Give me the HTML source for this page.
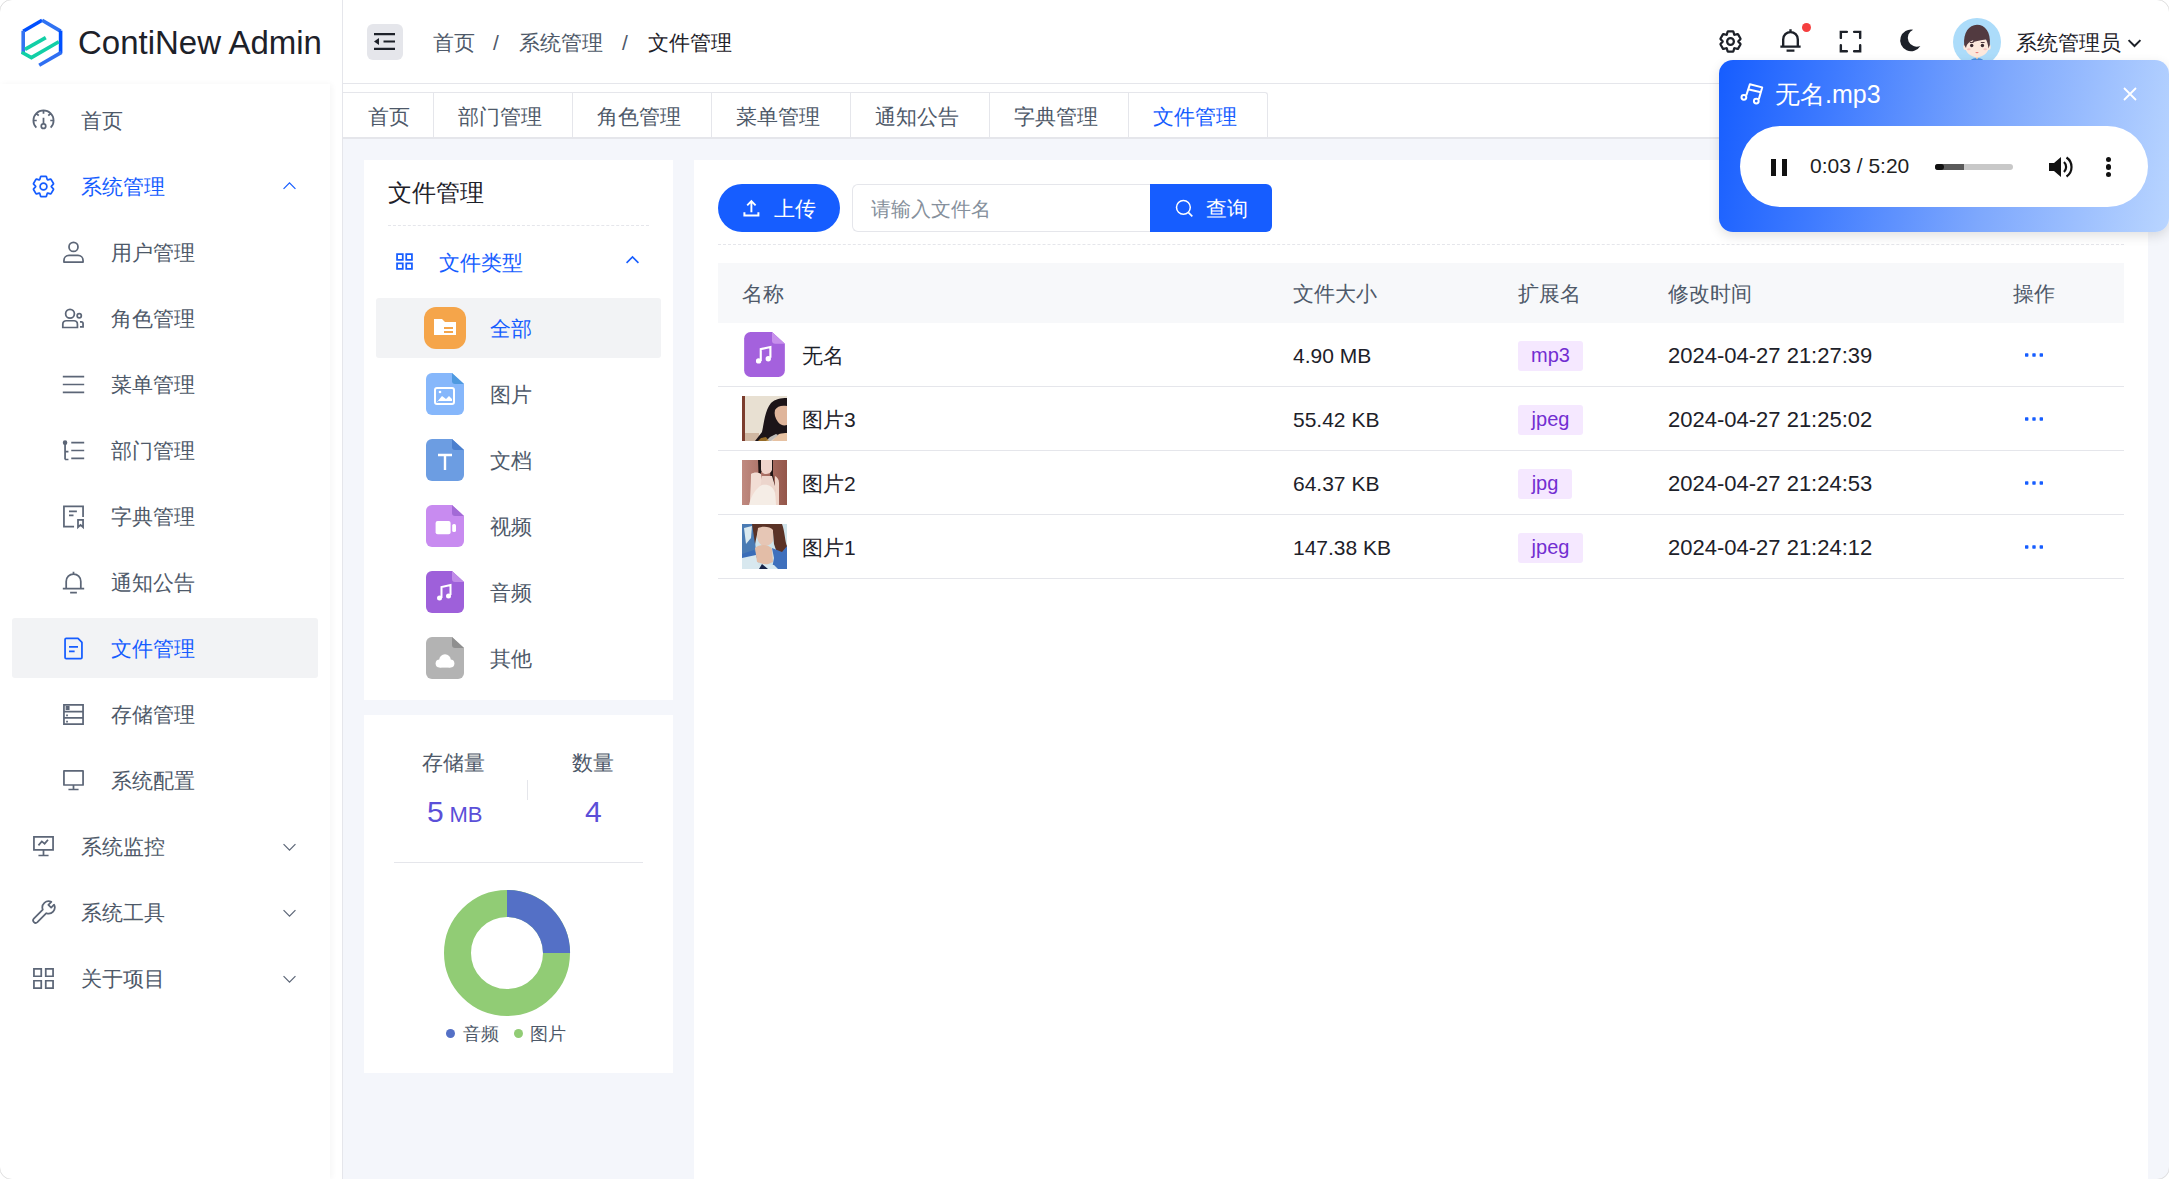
<!DOCTYPE html>
<html><head><meta charset="utf-8">
<style>
*{box-sizing:border-box;margin:0;padding:0}
html,body{width:2169px;height:1179px;overflow:hidden;background:#fff}
body{position:relative;font-family:"Liberation Sans",sans-serif;color:#1d2129;font-size:21px}
.a{position:absolute;white-space:nowrap}
.t{line-height:30px;height:31px;padding-top:1px}
svg.i{position:absolute;fill:none;stroke:#4e5969;stroke-width:3.1;stroke-linecap:butt;stroke-linejoin:miter}
.mi{color:#1d2129}
.blue{color:#165dff}
</style></head><body>
<!-- ============ SIDEBAR ============ -->
<div class="a" style="left:0;top:84px;width:330px;height:1095px;background:#fff;box-shadow:2px 0 6px rgba(0,0,0,.04)"></div>
<!-- logo -->
<svg class="a" style="left:0;top:0" width="80" height="80" viewBox="0 0 80 80" fill="none" stroke-width="3.6">
  <path d="M23.2 31.3 42.1 20.2" stroke="#0050ff"/>
  <path d="M42.1 20.2 60.6 31.1" stroke="#2f72f2"/>
  <path d="M23.2 30.8V53.4" stroke="#3473f1"/>
  <path d="M60.6 30.6V53.2" stroke="#0050ff"/>
  <path d="M61.5 52.4 39.2 65.2" stroke="#2f6ff2"/>
  <path d="M21.7 52.2 31.4 57.6 58.8 41.7" stroke="#12cfa6"/>
  <path d="M25 49.4 45.8 37.6" stroke="#12cfa6"/>
</svg>
<div class="a" style="left:78px;top:23px;font-size:33px;line-height:40px;color:#1d2129">ContiNew Admin</div>

<!-- menu -->
<svg class="i" style="left:30.0px;top:106.5px;stroke:#5c6677" width="27" height="27" viewBox="0 0 48 48"><path d="M11.3 36.7A18 18 0 1 1 36.7 36.7M24 6v6M6 24h6M36 24h6M11.3 11.3l4.2 4.2M36.7 11.3l-4.2 4.2M24 19v11"/><circle cx="24" cy="34" r="4"/></svg>
<div class="a t" style="left:81px;top:105px;color:#4e5969">首页</div>
<svg class="i" style="left:30.0px;top:172.5px;stroke:#165dff" width="27" height="27" viewBox="0 0 48 48"><path d="M18.797 6.732A1 1 0 0 1 19.76 6h8.48a1 1 0 0 1 .964.732l1.285 4.628a1 1 0 0 0 1.213.7l4.651-1.2a1 1 0 0 1 1.116.468l4.24 7.344a1 1 0 0 1-.153 1.2L38.193 23.3a1 1 0 0 0 0 1.402l3.364 3.427a1 1 0 0 1 .153 1.2l-4.24 7.344a1 1 0 0 1-1.116.468l-4.65-1.2a1 1 0 0 0-1.214.7l-1.285 4.628a1 1 0 0 1-.964.732h-8.48a1 1 0 0 1-.963-.732L17.51 36.64a1 1 0 0 0-1.213-.7l-4.65 1.2a1 1 0 0 1-1.116-.468l-4.24-7.344a1 1 0 0 1 .153-1.2L9.809 24.7a1 1 0 0 0 0-1.402l-3.364-3.427a1 1 0 0 1-.153-1.2l4.24-7.344a1 1 0 0 1 1.116-.468l4.65 1.2a1 1 0 0 0 1.214-.7l1.285-4.628Z"/><path d="M30 24a6 6 0 1 1-12 0 6 6 0 0 1 12 0Z"/></svg>
<div class="a t" style="left:81px;top:171px;color:#165dff">系统管理</div>
<svg class="i" style="left:280px;top:176.5px;stroke:#165dff" width="19" height="19" viewBox="0 0 48 48"><path d="M9 30 24 15 39 30"/></svg>
<svg class="i" style="left:60.0px;top:238.5px;stroke:#5c6677" width="27" height="27" viewBox="0 0 48 48"><circle cx="24" cy="14" r="8"/><path d="M7 38c0-5 4-9 9-9h16c5 0 9 4 9 9v3H7v-3Z" stroke-linejoin="round"/></svg>
<div class="a t" style="left:111px;top:237px;color:#4e5969">用户管理</div>
<svg class="i" style="left:60.0px;top:304.5px;stroke:#5c6677" width="27" height="27" viewBox="0 0 48 48"><circle cx="17.8" cy="15.5" r="7.8"/><circle cx="34.2" cy="19" r="3.7"/><path d="M5 34a6 6 0 0 1 6-6h14a6 6 0 0 1 6 6v6H5zM35.5 30h2.5a3 3 0 0 1 3 3v6h-5.5"/></svg>
<div class="a t" style="left:111px;top:303px;color:#4e5969">角色管理</div>
<svg class="i" style="left:60.0px;top:370.5px;stroke:#5c6677" width="27" height="27" viewBox="0 0 48 48"><path d="M5 10h38M5 24h38M5 38h38"/></svg>
<div class="a t" style="left:111px;top:369px;color:#4e5969">菜单管理</div>
<svg class="i" style="left:60.0px;top:436.5px;stroke:#5c6677" width="27" height="27" viewBox="0 0 48 48"><path d="M20 10h23M20 24h23M20 38h23M9 12v28m0-14h6M9 40h6"/><circle cx="9" cy="10" r="2.5" fill="#5c6677"/></svg>
<div class="a t" style="left:111px;top:435px;color:#4e5969">部门管理</div>
<svg class="i" style="left:60.0px;top:502.5px;stroke:#5c6677" width="27" height="27" viewBox="0 0 48 48"><path d="M41 25V6H7v36h18M16 15h14M16 22h8M32 30h9v13l-4.5-4-4.5 4V30Z"/></svg>
<div class="a t" style="left:111px;top:501px;color:#4e5969">字典管理</div>
<svg class="i" style="left:60.0px;top:568.5px;stroke:#5c6677" width="27" height="27" viewBox="0 0 48 48"><path d="M24 9c7.2 0 13 5.8 13 13v13H11V22c0-7.2 5.8-13 13-13Zm0 0V5M5 35h38M18 42h12"/></svg>
<div class="a t" style="left:111px;top:567px;color:#4e5969">通知公告</div>
<div class="a" style="left:12px;top:618px;width:306px;height:60px;background:#f2f3f5;border-radius:3px"></div>
<svg class="i" style="left:60.0px;top:634.5px;stroke:#165dff" width="27" height="27" viewBox="0 0 48 48"><path d="M16 21h16M16 29h10M37 42H11a2 2 0 0 1-2-2V8a2 2 0 0 1 2-2h21l7 7v27a2 2 0 0 1-2 2Z" stroke-linejoin="round"/></svg>
<div class="a t" style="left:111px;top:633px;color:#165dff">文件管理</div>
<svg class="i" style="left:60.0px;top:700.5px;stroke:#5c6677" width="27" height="27" viewBox="0 0 48 48"><path d="M7 7h34v34H7zM7 19h34M7 30h34"/><path d="M11 10h5v5h-5zM12 36h1v1h-1zM12 25h1v1h-1z" fill="#5c6677" stroke-width="2"/></svg>
<div class="a t" style="left:111px;top:699px;color:#4e5969">存储管理</div>
<svg class="i" style="left:60.0px;top:766.5px;stroke:#5c6677" width="27" height="27" viewBox="0 0 48 48"><path d="M24 32v8m-9 0h18M7 32h34V7H7v25Z" stroke-linejoin="round"/></svg>
<div class="a t" style="left:111px;top:765px;color:#4e5969">系统配置</div>
<svg class="i" style="left:30.0px;top:832.5px;stroke:#5c6677" width="27" height="27" viewBox="0 0 48 48"><path d="M41 7H7v23h34V7ZM24 30v10M15 40h18M15 22l6-7 5 4 6-7"/></svg>
<div class="a t" style="left:81px;top:831px;color:#4e5969">系统监控</div>
<svg class="i" style="left:280px;top:836.5px;stroke:#5c6677" width="19" height="19" viewBox="0 0 48 48"><path d="M9 18 24 33 39 18"/></svg>
<svg class="i" style="left:30.0px;top:898.5px;stroke:#5c6677" width="27" height="27" viewBox="0 0 48 48"><path d="M37.9 5.16A11 11 0 0 0 22.72 18.92L6.82 34.82A4.5 4.5 0 0 0 13.18 41.18L29.08 25.28A11 11 0 0 0 42.84 10.1L37.59 15.35 32.65 10.41Z" stroke-linejoin="round"/></svg>
<div class="a t" style="left:81px;top:897px;color:#4e5969">系统工具</div>
<svg class="i" style="left:280px;top:902.5px;stroke:#5c6677" width="19" height="19" viewBox="0 0 48 48"><path d="M9 18 24 33 39 18"/></svg>
<svg class="i" style="left:30.0px;top:964.5px;stroke:#5c6677" width="27" height="27" viewBox="0 0 48 48"><path d="M7 7h13v13H7zM28 7h13v13H28zM7 28h13v13H7zM28 28h13v13H28z"/></svg>
<div class="a t" style="left:81px;top:963px;color:#4e5969">关于项目</div>
<svg class="i" style="left:280px;top:968.5px;stroke:#5c6677" width="19" height="19" viewBox="0 0 48 48"><path d="M9 18 24 33 39 18"/></svg>
<!-- main vertical border + header border -->
<div class="a" style="left:342px;top:0;width:1px;height:1179px;background:#e5e6eb"></div>
<div class="a" style="left:343px;top:83px;width:1826px;height:1px;background:#e5e6eb"></div>


<!-- ============ HEADER ============ -->
<div class="a" style="left:367px;top:24px;width:36px;height:36px;background:#e5e6eb;border-radius:6px"></div>
<svg class="a" style="left:374px;top:33px" width="21" height="17" viewBox="0 0 21 17"><path d="M0 1.1h21M9.5 8.5H21M0 15.9h21" stroke="#1d2129" stroke-width="2.1"/><path d="M0 8.5l5-3.6v7.2z" fill="#1d2129"/></svg>
<div class="a t" style="left:433px;top:27px;color:#4e5969">首页</div>
<div class="a t" style="left:493px;top:27px;color:#4e5969">/</div>
<div class="a t" style="left:519px;top:27px;color:#4e5969">系统管理</div>
<div class="a t" style="left:622px;top:27px;color:#4e5969">/</div>
<div class="a t" style="left:648px;top:27px;color:#1d2129">文件管理</div>

<!-- right icons -->
<svg class="i" style="left:1717px;top:28px;stroke:#1d2129;stroke-width:4" width="27" height="27" viewBox="0 0 48 48"><path d="M18.797 6.732A1 1 0 0 1 19.76 6h8.48a1 1 0 0 1 .964.732l1.285 4.628a1 1 0 0 0 1.213.7l4.651-1.2a1 1 0 0 1 1.116.468l4.24 7.344a1 1 0 0 1-.153 1.2L38.193 23.3a1 1 0 0 0 0 1.402l3.364 3.427a1 1 0 0 1 .153 1.2l-4.24 7.344a1 1 0 0 1-1.116.468l-4.65-1.2a1 1 0 0 0-1.214.7l-1.285 4.628a1 1 0 0 1-.964.732h-8.48a1 1 0 0 1-.963-.732L17.51 36.64a1 1 0 0 0-1.213-.7l-4.65 1.2a1 1 0 0 1-1.116-.468l-4.24-7.344a1 1 0 0 1 .153-1.2L9.809 24.7a1 1 0 0 0 0-1.402l-3.364-3.427a1 1 0 0 1-.153-1.2l4.24-7.344a1 1 0 0 1 1.116-.468l4.65 1.2a1 1 0 0 0 1.214-.7l1.285-4.628Z"/><path d="M30 24a6 6 0 1 1-12 0 6 6 0 0 1 12 0Z"/></svg>
<svg class="i" style="left:1777px;top:27px;stroke:#1d2129;stroke-width:4.2" width="27" height="27" viewBox="0 0 48 48"><path d="M24 9c7.18 0 13 5.82 13 13v13H11V22c0-7.18 5.82-13 13-13Zm0 0V4M6 35h36m-25 7h14" stroke-linejoin="round"/></svg>
<div class="a" style="left:1801.5px;top:22.5px;width:9px;height:9px;border-radius:50%;background:#f53f3f"></div>
<svg class="i" style="left:1836px;top:27px;stroke:#1d2129;stroke-width:4" width="29" height="29" viewBox="0 0 48 48"><path d="M8 18V8h10M30 8h10v10M40 30v10H30M18 40H8V30" stroke-linecap="round"/></svg>
<svg class="a" style="left:1895px;top:26px" width="29" height="29" viewBox="0 0 48 48"><path d="M30 6a18 18 0 1 0 12 27 14 14 0 0 1-12-27Z" fill="#1d2129"/></svg>
<svg class="a" style="left:1953px;top:18px" width="48" height="48" viewBox="0 0 48 48">
 <defs><clipPath id="av"><circle cx="24" cy="24" r="24"/></clipPath></defs>
 <circle cx="24" cy="24" r="24" fill="#acdcfa"/>
 <g clip-path="url(#av)">
  <path d="M13 48c2-5 6-8 11-8s9 3 11 8z" fill="#4a8fe0"/>
  <path d="M21 37h6l-3 4.5z" fill="#fbd9b9"/>
  <ellipse cx="12.3" cy="29" rx="2" ry="3" fill="#fce8dc"/><ellipse cx="35.7" cy="29" rx="2" ry="3" fill="#fce8dc"/>
  <ellipse cx="24" cy="28.5" rx="11.8" ry="10.5" fill="#fce8dc"/>
  <path d="M11.2 27C10 15 16 6.8 24 6.8S38 14 36.8 27L35.5 30.5C35 26 34 23 33 21.5 28 22 23 23 19 24.5L20.5 22C17 23.5 14 25 13 30Z" fill="#523a40"/>
  <path d="M16.8 24.5h3.8M27.8 24.5h3.8" stroke="#523a40" stroke-width="1"/>
  <circle cx="18.7" cy="27.5" r="1.7" fill="#3a2a30"/><circle cx="29.4" cy="27.5" r="1.7" fill="#3a2a30"/>
  <ellipse cx="15.8" cy="31.2" rx="1.8" ry="1" fill="#f6c2c0"/><ellipse cx="32.2" cy="31.2" rx="1.8" ry="1" fill="#f6c2c0"/>
  <path d="M22.2 34.3h3.6q-1.8 1.8-3.6 0z" fill="#e86060"/>
 </g>
</svg>
<div class="a t" style="left:2016px;top:27px;color:#1d2129">系统管理员</div>
<svg class="i" style="left:2125px;top:33px;stroke:#1d2129;stroke-width:5" width="19" height="19" viewBox="0 0 48 48"><path d="M9 18 24 33 39 18"/></svg>

<!-- ============ TABS ============ -->
<div class="a" style="left:343px;top:92px;width:925px;height:46px;background:#fff;border-top:1px solid #e5e6eb;border-right:1px solid #e5e6eb;border-top-right-radius:3px"></div>
<div class="a" style="left:343px;top:139px;width:1826px;height:1040px;background:#f4f6fb"></div>
<div class="a" style="left:343px;top:137px;width:1826px;height:2px;background:#e5e6eb"></div>
<div class="a t" style="left:368px;top:101px;color:#4e5969">首页</div>
<div class="a" style="left:433px;top:93px;width:1px;height:44px;background:#e5e6eb"></div>
<div class="a t" style="left:458px;top:101px;color:#4e5969">部门管理</div>
<div class="a" style="left:572px;top:93px;width:1px;height:44px;background:#e5e6eb"></div>
<div class="a t" style="left:597px;top:101px;color:#4e5969">角色管理</div>
<div class="a" style="left:711px;top:93px;width:1px;height:44px;background:#e5e6eb"></div>
<div class="a t" style="left:736px;top:101px;color:#4e5969">菜单管理</div>
<div class="a" style="left:850px;top:93px;width:1px;height:44px;background:#e5e6eb"></div>
<div class="a t" style="left:875px;top:101px;color:#4e5969">通知公告</div>
<div class="a" style="left:989px;top:93px;width:1px;height:44px;background:#e5e6eb"></div>
<div class="a t" style="left:1014px;top:101px;color:#4e5969">字典管理</div>
<div class="a" style="left:1128px;top:93px;width:1px;height:44px;background:#e5e6eb"></div>
<div class="a t" style="left:1153px;top:101px;color:#165dff">文件管理</div>


<!-- ============ LEFT CARD ============ -->
<div class="a" style="left:364px;top:160px;width:309px;height:540px;background:#fff"></div>
<div class="a" style="left:388px;top:177px;font-size:24px;line-height:32px;color:#1d2129">文件管理</div>
<div class="a" style="left:388px;top:225px;width:261px;height:0;border-top:1px dashed #e5e6eb"></div>
<svg class="i" style="left:394px;top:251px;stroke:#165dff;stroke-width:4" width="21" height="21" viewBox="0 0 48 48"><path d="M7 7h13v13H7zM28 7h13v13H28zM7 28h13v13H7zM28 28h13v13H28z"/></svg>
<div class="a t" style="left:439px;top:247px;color:#165dff">文件类型</div>
<svg class="i" style="left:623px;top:251px;stroke:#165dff;stroke-width:4" width="19" height="19" viewBox="0 0 48 48"><path d="M9 30 24 15 39 30"/></svg>
<div class="a" style="left:376px;top:298px;width:285px;height:60px;background:#f2f3f5;border-radius:3px"></div>
<!-- all (orange) -->
<svg class="a" style="left:424px;top:307px" width="42" height="42" viewBox="0 0 42 42">
 <rect x="0" y="0" width="42" height="42" rx="12" fill="#f5a54a"/>
 <path d="M10 12h8l3 3h11v13H10z" fill="#fff"/>
 <path d="M20 21h9M20 25h9" stroke="#f5a54a" stroke-width="2"/>
</svg>
<div class="a t" style="left:490px;top:313px;color:#165dff">全部</div>
<svg class="a" style="left:426px;top:373px" width="38" height="42" viewBox="0 0 38 42">
 <path d="M6 0h20l12 11v25a6 6 0 0 1-6 6H6a6 6 0 0 1-6-6V6a6 6 0 0 1 6-6z" fill="#86b7fb"/>
 <path d="M26 0l12 11H29a3 3 0 0 1-3-3z" fill="#4f9ae0"/>
 <rect x="9" y="15" width="19" height="16" rx="2" fill="none" stroke="#fff" stroke-width="2"/><path d="M11 29l5-6 4 3 3-3 3 3v2H11z" fill="#fff"/><circle cx="14" cy="19" r="1.3" fill="#fff"/>
</svg>
<div class="a t" style="left:490px;top:379px;color:#4e5969">图片</div>
<svg class="a" style="left:426px;top:439px" width="38" height="42" viewBox="0 0 38 42">
 <path d="M6 0h20l12 11v25a6 6 0 0 1-6 6H6a6 6 0 0 1-6-6V6a6 6 0 0 1 6-6z" fill="#6c9de2"/>
 <path d="M26 0l12 11H29a3 3 0 0 1-3-3z" fill="#4b7fce"/>
 <path d="M12 16h14M19 16v15" stroke="#fff" stroke-width="2.4"/>
</svg>
<div class="a t" style="left:490px;top:445px;color:#4e5969">文档</div>
<svg class="a" style="left:426px;top:505px" width="38" height="42" viewBox="0 0 38 42">
 <path d="M6 0h20l12 11v25a6 6 0 0 1-6 6H6a6 6 0 0 1-6-6V6a6 6 0 0 1 6-6z" fill="#c88bf0"/>
 <path d="M26 0l12 11H29a3 3 0 0 1-3-3z" fill="#a36ad6"/>
 <rect x="9.6" y="16" width="15" height="13.2" rx="2" fill="#fff"/><rect x="26.2" y="18.9" width="3.8" height="8.1" rx="1.6" fill="#fff"/>
</svg>
<div class="a t" style="left:490px;top:511px;color:#4e5969">视频</div>
<svg class="a" style="left:426px;top:571px" width="38" height="42" viewBox="0 0 38 42">
 <path d="M6 0h20l12 11v25a6 6 0 0 1-6 6H6a6 6 0 0 1-6-6V6a6 6 0 0 1 6-6z" fill="#9e60da"/>
 <path d="M26 0l12 11H29a3 3 0 0 1-3-3z" fill="#c08ce8"/>
 <path d="M15.5 27V16l9-2v10" stroke="#fff" stroke-width="2" fill="none"/><circle cx="13.5" cy="27" r="2.5" fill="#fff"/><circle cx="22.5" cy="25" r="2.5" fill="#fff"/>
</svg>
<div class="a t" style="left:490px;top:577px;color:#4e5969">音频</div>
<svg class="a" style="left:426px;top:637px" width="38" height="42" viewBox="0 0 38 42">
 <path d="M6 0h20l12 11v25a6 6 0 0 1-6 6H6a6 6 0 0 1-6-6V6a6 6 0 0 1 6-6z" fill="#b3b3b3"/>
 <path d="M26 0l12 11H29a3 3 0 0 1-3-3z" fill="#8f8f8f"/>
 <circle cx="19" cy="23" r="5.8" fill="#fff"/><circle cx="13.6" cy="26.6" r="4" fill="#fff"/><circle cx="24.4" cy="26.6" r="4" fill="#fff"/><rect x="13.6" y="25" width="10.8" height="5.6" fill="#fff"/>
</svg>
<div class="a t" style="left:490px;top:643px;color:#4e5969">其他</div>

<!-- ============ STATS CARD ============ -->
<div class="a" style="left:364px;top:715px;width:309px;height:358px;background:#fff"></div>
<div class="a t" style="left:422px;top:747px;color:#4e5969">存储量</div>
<div class="a t" style="left:572px;top:747px;color:#4e5969">数量</div>
<div class="a" style="left:527px;top:780px;width:1px;height:20px;background:#e5e6eb"></div>
<div class="a" style="left:427px;top:794px;line-height:36px;color:#5b4fd8"><span style="font-size:30px">5</span> <span style="font-size:22px">MB</span></div>
<div class="a" style="left:585px;top:794px;line-height:36px;color:#5b4fd8;font-size:30px">4</div>
<div class="a" style="left:394px;top:862px;width:249px;height:1px;background:#e5e6eb"></div>
<svg class="a" style="left:443px;top:889px" width="128" height="128" viewBox="0 0 128 128">
 <circle cx="64" cy="64" r="49.5" fill="none" stroke="#91cc75" stroke-width="27"/>
 <path d="M64 0.9A63.1 63.1 0 0 1 127.1 64H100A36 36 0 0 0 64 28z" fill="#5470c6"/>
</svg>
<div class="a" style="left:446px;top:1029px;width:9px;height:9px;border-radius:50%;background:#5470c6"></div>
<div class="a" style="left:463px;top:1021px;font-size:18px;line-height:26px;color:#4e5969">音频</div>
<div class="a" style="left:514px;top:1029px;width:9px;height:9px;border-radius:50%;background:#91cc75"></div>
<div class="a" style="left:530px;top:1021px;font-size:18px;line-height:26px;color:#4e5969">图片</div>


<!-- ============ RIGHT CARD ============ -->
<div class="a" style="left:694px;top:160px;width:1454px;height:1019px;background:#fff"></div>
<div class="a" style="left:718px;top:184px;width:122px;height:48px;background:#165dff;border-radius:24px"></div>
<svg class="a" style="left:743px;top:199px" width="17" height="19" viewBox="0 0 17 19" fill="none" stroke="#fff"><path d="M8.4 2.2V13.3M4.2 6.4 8.4 2.2 12.6 6.4" stroke-width="1.9"/><path d="M1.4 13.2V16.6H15.4V13.2" stroke-width="2"/></svg>
<div class="a t" style="left:774px;top:193px;color:#fff">上传</div>
<div class="a" style="left:852px;top:184px;width:299px;height:48px;background:#fff;border:1px solid #e5e6eb;border-right:none;border-radius:6px 0 0 6px"></div>
<div class="a t" style="left:871px;top:193px;color:#86909c;font-size:19.5px">请输入文件名</div>
<div class="a" style="left:1150px;top:184px;width:122px;height:48px;background:#165dff;border-radius:0 6px 6px 0"></div>
<svg class="a" style="left:1174px;top:198px" width="20" height="20" viewBox="0 0 20 20" fill="none" stroke="#fff"><circle cx="9.4" cy="9.3" r="6.9" stroke-width="1.5"/><path d="M14.3 14.3 18.3 18.3" stroke-width="1.7"/></svg>
<div class="a t" style="left:1206px;top:193px;color:#fff">查询</div>
<div class="a" style="left:718px;top:244px;width:1406px;height:0;border-top:1px dashed #e5e6eb"></div>
<!-- table header -->
<div class="a" style="left:718px;top:263px;width:1406px;height:60px;background:#f7f8fa"></div>
<div class="a t" style="left:742px;top:278px;color:#4e5969">名称</div>
<div class="a t" style="left:1293px;top:278px;color:#4e5969">文件大小</div>
<div class="a t" style="left:1518px;top:278px;color:#4e5969">扩展名</div>
<div class="a t" style="left:1668px;top:278px;color:#4e5969">修改时间</div>
<div class="a t" style="left:2013px;top:278px;color:#4e5969">操作</div>
<svg class="a" style="left:744px;top:332px" width="41" height="45" viewBox="0 0 38 42">
 <path d="M6 0h20l12 11v25a6 6 0 0 1-6 6H6a6 6 0 0 1-6-6V6a6 6 0 0 1 6-6z" fill="#a461dd"/>
 <path d="M26 0l12 11H29a3 3 0 0 1-3-3z" fill="#c790ec"/>
 <path d="M15.5 27V16l9-2v10" stroke="#fff" stroke-width="2" fill="none"/><circle cx="13.5" cy="27" r="2.5" fill="#fff"/><circle cx="22.5" cy="25" r="2.5" fill="#fff"/>
</svg>
<div class="a t" style="left:802px;top:340px;color:#1d2129">无名</div>
<div class="a t" style="left:1293px;top:340px;color:#1d2129">4.90 MB</div>
<div class="a" style="left:1518px;top:341px;height:30px;width:65px;background:#f5e8ff;border-radius:3px;color:#722ed1;font-size:20px;line-height:29px;text-align:center">mp3</div>
<div class="a t" style="left:1668px;top:340px;color:#1d2129;font-size:22px">2024-04-27 21:27:39</div>
<svg class="a" style="left:2024px;top:352px" width="20" height="6" viewBox="0 0 20 6"><rect x="1" y="1.3" width="3.4" height="3.4" rx=".6" fill="#165dff"/><rect x="8.3" y="1.3" width="3.4" height="3.4" rx=".6" fill="#165dff"/><rect x="15.6" y="1.3" width="3.4" height="3.4" rx=".6" fill="#165dff"/></svg>
<div class="a" style="left:718px;top:386px;width:1406px;height:1px;background:#e5e6eb"></div>
<svg class="a" style="left:742px;top:396px" width="45" height="45" viewBox="0 0 45 45">
 <rect width="45" height="45" fill="#e8e0d2"/><rect x="0" y="0" width="3" height="45" fill="#7b3d2e"/>
 <rect x="3" y="37" width="14" height="8" fill="#cfb7a2"/>
 <path d="M13 45 20 36C22 27 23 14 29 7 33 3 39 2 45 2V45Z" fill="#1c1418"/>
 <path d="M33 14C35 10 40 9 45 10V29C42 30 38 29 36 26 33 22 32 18 33 14Z" fill="#dfb59b"/>
 <path d="M29 45 37 38C40 37 43 37 45 37V45Z" fill="#e7c2a3"/>
 <path d="M24 45 28 41 34 38 36 39 30 45Z" fill="#e9e5e0" opacity=".8"/>
 <path d="M16 45 19 42 24 41 27 45Z" fill="#c9902f" opacity=".7"/>
</svg>
<div class="a t" style="left:802px;top:404px;color:#1d2129">图片3</div>
<div class="a t" style="left:1293px;top:404px;color:#1d2129">55.42 KB</div>
<div class="a" style="left:1518px;top:405px;height:30px;width:65px;background:#f5e8ff;border-radius:3px;color:#722ed1;font-size:20px;line-height:29px;text-align:center">jpeg</div>
<div class="a t" style="left:1668px;top:404px;color:#1d2129;font-size:22px">2024-04-27 21:25:02</div>
<svg class="a" style="left:2024px;top:416px" width="20" height="6" viewBox="0 0 20 6"><rect x="1" y="1.3" width="3.4" height="3.4" rx=".6" fill="#165dff"/><rect x="8.3" y="1.3" width="3.4" height="3.4" rx=".6" fill="#165dff"/><rect x="15.6" y="1.3" width="3.4" height="3.4" rx=".6" fill="#165dff"/></svg>
<div class="a" style="left:718px;top:450px;width:1406px;height:1px;background:#e5e6eb"></div>
<svg class="a" style="left:742px;top:460px" width="45" height="45" viewBox="0 0 45 45">
 <defs><linearGradient id="g2" x1="0" x2="1"><stop offset="0" stop-color="#c08a80"/><stop offset="1" stop-color="#94564a"/></linearGradient></defs>
 <rect width="45" height="45" fill="url(#g2)"/>
 <path d="M16 0H31V14L34 34 31 36 28 12H19L19 26 17 26Z" fill="#1f1414"/>
 <path d="M19 0H30V10C29 13 26 14 24 14 21 14 19 12 19 9Z" fill="#f0d4cb"/>
 <path d="M9 14C12 12 16 12 19 14L21 26 18 45H8C8 35 9 24 9 14Z" fill="#f2ddd4"/>
 <path d="M20 16H30L33 26 36 45H21L18 30Z" fill="#ecd5cc"/>
 <path d="M7 45C9 36 14 28 20 25 26 24 31 26 33 33L36 45Z" fill="#f5ede6"/>
 <path d="M33 16C35 17 37 19 37 23V45H34L33 28Z" fill="#efd6cb"/>
</svg>
<div class="a t" style="left:802px;top:468px;color:#1d2129">图片2</div>
<div class="a t" style="left:1293px;top:468px;color:#1d2129">64.37 KB</div>
<div class="a" style="left:1518px;top:469px;height:30px;width:54px;background:#f5e8ff;border-radius:3px;color:#722ed1;font-size:20px;line-height:29px;text-align:center">jpg</div>
<div class="a t" style="left:1668px;top:468px;color:#1d2129;font-size:22px">2024-04-27 21:24:53</div>
<svg class="a" style="left:2024px;top:480px" width="20" height="6" viewBox="0 0 20 6"><rect x="1" y="1.3" width="3.4" height="3.4" rx=".6" fill="#165dff"/><rect x="8.3" y="1.3" width="3.4" height="3.4" rx=".6" fill="#165dff"/><rect x="15.6" y="1.3" width="3.4" height="3.4" rx=".6" fill="#165dff"/></svg>
<div class="a" style="left:718px;top:514px;width:1406px;height:1px;background:#e5e6eb"></div>
<svg class="a" style="left:742px;top:524px" width="45" height="45" viewBox="0 0 45 45">
 <rect width="45" height="45" fill="#cfe3ea"/>
 <path d="M0 0H12L14 30 0 32Z" fill="#4a7bb4"/>
 <path d="M2 4 10 2 9 14 4 20Z" fill="#dbeaf0"/>
 <path d="M0 30 12 26 18 33 14 45H0Z" fill="#3a6db8"/>
 <path d="M0 45V34L14 31 18 45Z" fill="#d8e8ef"/>
 <path d="M10 0H40C43 8 43 18 45 22V30L38 38 32 20 31 8 16 6 13 20Z" fill="#5a3226"/>
 <path d="M16 4C20 2 28 2 31 6L31 17C29 21 25 22 22 22 18 21 16 18 15 13Z" fill="#e6c6b5"/>
 <path d="M13 24C17 20 27 20 30 25L31 38 24 41 15 38Z" fill="#e3bda7"/>
 <path d="M30 24 40 28 45 22V45H30L32 34Z" fill="#3f70bd"/>
 <path d="M14 45 20 40 32 41 36 45Z" fill="#d9e9f0"/>
 <path d="M20 40 26 45H17Z" fill="#17244a"/>
</svg>
<div class="a t" style="left:802px;top:532px;color:#1d2129">图片1</div>
<div class="a t" style="left:1293px;top:532px;color:#1d2129">147.38 KB</div>
<div class="a" style="left:1518px;top:533px;height:30px;width:65px;background:#f5e8ff;border-radius:3px;color:#722ed1;font-size:20px;line-height:29px;text-align:center">jpeg</div>
<div class="a t" style="left:1668px;top:532px;color:#1d2129;font-size:22px">2024-04-27 21:24:12</div>
<svg class="a" style="left:2024px;top:544px" width="20" height="6" viewBox="0 0 20 6"><rect x="1" y="1.3" width="3.4" height="3.4" rx=".6" fill="#165dff"/><rect x="8.3" y="1.3" width="3.4" height="3.4" rx=".6" fill="#165dff"/><rect x="15.6" y="1.3" width="3.4" height="3.4" rx=".6" fill="#165dff"/></svg>
<div class="a" style="left:718px;top:578px;width:1406px;height:1px;background:#e5e6eb"></div>


<!-- ============ PLAYER ============ -->
<div class="a" style="left:1719px;top:60px;width:450px;height:172px;border-radius:14px;background:linear-gradient(100deg,#165dff 0%,#3f7bff 25%,#7ea8fd 60%,#b9d5ff 100%);box-shadow:0 4px 12px rgba(0,0,0,.12)"></div>
<svg class="a" style="left:1739px;top:82px" width="26" height="24" viewBox="0 0 26 24" fill="none" stroke="#fff" stroke-width="2" stroke-linejoin="round"><path d="M7.3 13.4 10.9 2.2 23.2 5.4 19.8 17.3"/><path d="M10 7.6 21.9 10.2"/><circle cx="4.9" cy="15.3" r="2.4"/><circle cx="17.3" cy="19.1" r="2.4"/></svg>
<div class="a" style="left:1775px;top:77px;font-size:25px;line-height:34px;color:#fff">无名.mp3</div>
<svg class="a" style="left:2123px;top:87px" width="14" height="14" viewBox="0 0 14 14"><path d="M1 1 13 13M13 1 1 13" stroke="#fff" stroke-width="1.8"/></svg>
<div class="a" style="left:1740px;top:126px;width:408px;height:81px;border-radius:40.5px;background:#fff"></div>
<div class="a" style="left:1771px;top:158.6px;width:4.6px;height:17.4px;background:#111"></div>
<div class="a" style="left:1782.3px;top:158.6px;width:4.6px;height:17.4px;background:#111"></div>
<div class="a" style="left:1810px;top:151px;font-size:21px;line-height:30px;color:#1f1f1f">0:03 / 5:20</div>
<div class="a" style="left:1935px;top:164px;width:78px;height:6px;border-radius:3px;background:#c8c8c8"></div>
<div class="a" style="left:1935px;top:164px;width:29px;height:6px;border-radius:3px 0 0 3px;background:#5a5a5a"></div>
<div class="a" style="left:1935px;top:164px;width:9px;height:6px;border-radius:3px;background:#111"></div>
<svg class="a" style="left:2048px;top:155px" width="26" height="24" viewBox="0 0 26 24"><path d="M1 8h5l7-6v20l-7-6H1z" fill="#111"/><path d="M16 7a7 7 0 0 1 0 10" stroke="#111" stroke-width="2.2" fill="none"/><path d="M18.5 2.5a11.5 11.5 0 0 1 0 19" stroke="#111" stroke-width="2.2" fill="none"/></svg>
<div class="a" style="left:2106.3px;top:157px;width:5.2px;height:5.2px;border-radius:50%;background:#111"></div>
<div class="a" style="left:2106.3px;top:164.4px;width:5.2px;height:5.2px;border-radius:50%;background:#111"></div>
<div class="a" style="left:2106.3px;top:171.8px;width:5.2px;height:5.2px;border-radius:50%;background:#111"></div>

<div class="a" style="left:-1px;top:-1px;width:2171px;height:1181px;border:1.2px solid #dedede;border-radius:13px;box-shadow:0 0 0 30px #fff;pointer-events:none"></div>
</body></html>
